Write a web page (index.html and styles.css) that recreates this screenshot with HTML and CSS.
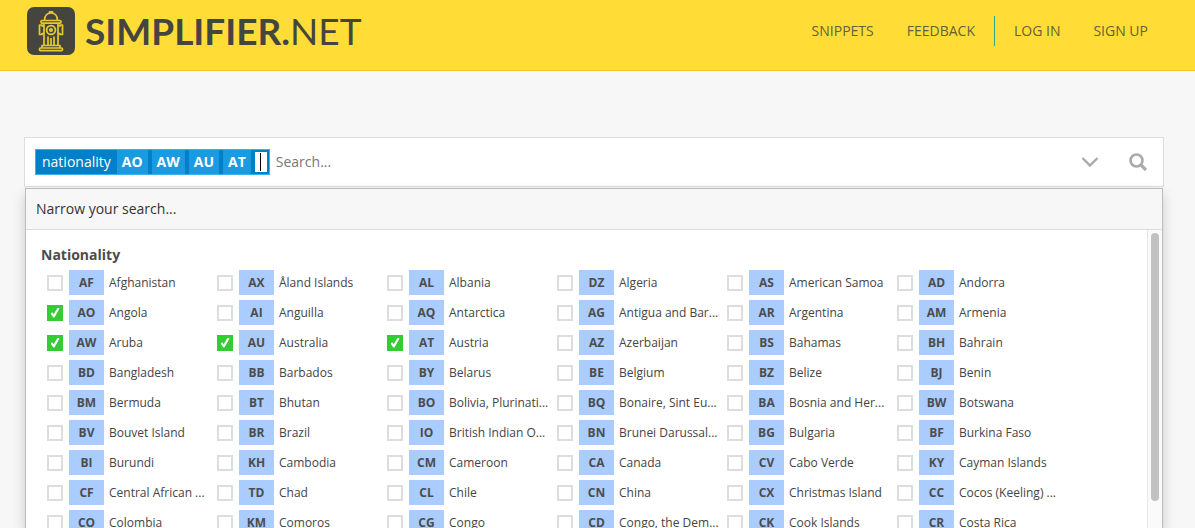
FILE: index.html
```html
<!DOCTYPE html>
<html lang="en">
  <head>
    <meta charset="UTF-8" />
    <meta name="viewport" content="width=device-width, initial-scale=1.0" />
    <title>Simplifier.net - Search</title>
    <link rel="stylesheet" href="styles.css">
  </head>
  <body>
    <header class="topbar">
      <a class="logo" href="#">
        <svg class="logo-icon" viewBox="0 0 48 48" aria-hidden="true">
          <rect width="48" height="48" rx="7" fill="#45453f" />
          <g fill="none" stroke="#e8ca2e" stroke-width="1.7" stroke-linejoin="round">
            <path d="M17.500 13.500c0-5 3-7.500 6.500-7.500s6.500 2.500 6.500 7.500M22.500 6V4.800h3V6" />
            <rect x="14" y="13.500" width="20" height="2.600" rx="1" />
            <path d="M17 16.500V38.500M31 16.500V38.500M17 19h-2v-1h-2.500v9.500H15v-1h2M31 19h2v-1h2.500v9.500H33v-1h-2" />
            <circle cx="24" cy="23" r="4.400" stroke-width="1.8" />
            <circle cx="24" cy="23" r="1.200" />
            <path d="M21 29.500v8.500M24 31v7M27 29.500v8.500M15 41v-2.500h18V41" />
            <rect x="12.500" y="41" width="23" height="2.600" rx="1" />
          </g>
        </svg>
        <span class="logo-text"><b>SIMPLIFIER.</b>NET</span>
      </a>
      <nav class="menu">
        <a href="#">SNIPPETS</a>
        <a href="#">FEEDBACK</a>
        <span class="divider"></span>
        <a href="#">LOG IN</a>
        <a href="#">SIGN UP</a>
      </nav>
    </header>

    <main class="content">
      <form class="search" id="searchForm">
        <div class="filter">
          <label class="filter-name" for="filterValue">nationality</label>
          <span class="filter-value">AO</span>
          <span class="filter-value">AW</span>
          <span class="filter-value">AU</span>
          <span class="filter-value">AT</span>
          <input class="filter-input" type="text" id="filterValue" />
        </div>
        <input class="search-input" type="text" placeholder="Search..." aria-label="Search" />
        <button class="icon-button" type="button" aria-label="Show filters">
          <svg width="18" height="12" viewBox="0 0 18 12">
            <path d="M1.500 2l7.500 7.500L16.500 2" fill="none" stroke="#aaa" stroke-width="2.400" />
          </svg>
        </button>
        <button class="icon-button" type="submit" aria-label="Search">
          <svg width="18" height="18" viewBox="0 0 18 18">
            <circle cx="7.500" cy="7.500" r="6" fill="none" stroke="#aaa" stroke-width="2.600" />
            <path d="M12 12l5 5" stroke="#aaa" stroke-width="3.200" />
          </svg>
        </button>
      </form>

      <section class="dropdown">
        <div class="dropdown-title">Narrow your search...</div>
        <div class="dropdown-body">
          <div class="group">
            <h2>Nationality</h2>
            <div class="countries" id="countries"></div>
          </div>
          <div class="scrollbar"><div class="thumb"></div></div>
        </div>
      </section>
    </main>

    <script>
      const selected = ["AO", "AW", "AU", "AT"];

      const countries = [
        ["AF", "Afghanistan"],
        ["AX", "Åland Islands"],
        ["AL", "Albania"],
        ["DZ", "Algeria"],
        ["AS", "American Samoa"],
        ["AD", "Andorra"],
        ["AO", "Angola"],
        ["AI", "Anguilla"],
        ["AQ", "Antarctica"],
        ["AG", "Antigua and Barbuda"],
        ["AR", "Argentina"],
        ["AM", "Armenia"],
        ["AW", "Aruba"],
        ["AU", "Australia"],
        ["AT", "Austria"],
        ["AZ", "Azerbaijan"],
        ["BS", "Bahamas"],
        ["BH", "Bahrain"],
        ["BD", "Bangladesh"],
        ["BB", "Barbados"],
        ["BY", "Belarus"],
        ["BE", "Belgium"],
        ["BZ", "Belize"],
        ["BJ", "Benin"],
        ["BM", "Bermuda"],
        ["BT", "Bhutan"],
        ["BO", "Bolivia, Plurinational State of"],
        ["BQ", "Bonaire, Sint Eustatius and Saba"],
        ["BA", "Bosnia and Herzegovina"],
        ["BW", "Botswana"],
        ["BV", "Bouvet Island"],
        ["BR", "Brazil"],
        ["IO", "British Indian Ocean Territory"],
        ["BN", "Brunei Darussalam"],
        ["BG", "Bulgaria"],
        ["BF", "Burkina Faso"],
        ["BI", "Burundi"],
        ["KH", "Cambodia"],
        ["CM", "Cameroon"],
        ["CA", "Canada"],
        ["CV", "Cabo Verde"],
        ["KY", "Cayman Islands"],
        ["CF", "Central African Republic"],
        ["TD", "Chad"],
        ["CL", "Chile"],
        ["CN", "China"],
        ["CX", "Christmas Island"],
        ["CC", "Cocos (Keeling) Islands"],
        ["CO", "Colombia"],
        ["KM", "Comoros"],
        ["CG", "Congo"],
        ["CD", "Congo, the Democratic Republic of the"],
        ["CK", "Cook Islands"],
        ["CR", "Costa Rica"],
      ];

      const maxWidth = 100;
      const list = document.getElementById("countries");
      const ctx = document.createElement("canvas").getContext("2d");
      ctx.font = '12px "Open Sans", sans-serif';

      // cut long names so that they fit in their column
      function shorten(name) {
        if (ctx.measureText(name).width <= maxWidth) return name;
        let end = name.length;
        while (ctx.measureText(name.slice(0, end) + "...").width > maxWidth) {
          end--;
        }
        return name.slice(0, end) + "...";
      }

      countries.forEach(([code, name]) => {
        const label = document.createElement("label");
        label.className = "country";

        const box = document.createElement("input");
        box.type = "checkbox";
        box.value = code;
        box.checked = selected.includes(code);

        const badge = document.createElement("span");
        badge.className = "code";
        badge.textContent = code;

        const text = document.createElement("span");
        text.className = "name";
        text.textContent = shorten(name);

        label.append(box, badge, text);
        list.appendChild(label);
      });

      document
        .getElementById("searchForm")
        .addEventListener("submit", (e) => e.preventDefault());
    </script>
  </body>
</html>
```

FILE: styles.css
```css
* {
  box-sizing: border-box;
}
body {
  margin: 0;
  height: 100vh;
  display: flex;
  flex-direction: column;
  overflow: hidden;
  background-color: #f7f7f7;
  color: #444;
  font-family: "Open Sans", sans-serif;
  font-size: 14px;
}
input, button {
  font-family: inherit;
  font-size: inherit;
}

/* header */
.topbar {
  display: flex;
  justify-content: space-between;
  align-items: flex-start;
  padding: 7px 47px 15px 27px;
  background-color: #ffdd36;
  border-bottom: 1px solid #f0c62c;
}
.logo {
  display: flex;
  align-items: center;
  gap: 10px;
  color: #45453f;
  text-decoration: none;
}
.logo-icon {
  width: 48px;
  height: 48px;
}
.logo-text {
  font-family: Lato, sans-serif;
  font-size: 37px;
  line-height: 48px;
}
.menu {
  display: flex;
  align-items: center;
  gap: 33px;
  padding-top: 8px;
}
.menu a {
  color: #66603a;
  line-height: 32px;
  text-decoration: none;
}
.divider {
  width: 1px;
  height: 30px;
  margin: 0 -14px;
  background-color: #2fa58c;
}

/* search box */
.content {
  flex: 1;
  min-height: 0;
  display: flex;
  flex-direction: column;
  gap: 1px;
  padding: 66px 31px 0 24px;
}
.search {
  display: flex;
  align-items: center;
  height: 50px;
  padding: 0 1px 0 10px;
  background-color: #fff;
  border: 1px solid #ddd;
}
.filter {
  display: flex;
  height: 26px;
  gap: 4px;
  padding-right: 2px;
  background-color: #0080c8;
  border: 1px solid #35b3ea;
  color: #fff;
  line-height: 24px;
}
.filter-name {
  padding: 0 2px 0 6px;
}
.filter-value {
  padding: 0 5px;
  background-color: #1a9ae0;
  font-weight: bold;
}
.filter-input {
  width: 12px;
  height: 20px;
  margin: 2px 0;
  padding: 0;
  border: 0;
  background: linear-gradient(#000, #000) center / 1px 18px no-repeat #fff;
}
.search-input {
  flex: 1;
  min-width: 0;
  height: 26px;
  padding: 0 6px 2px;
  border: 0;
  outline: 0;
  background: none;
}
.search-input::placeholder {
  color: #777;
}
.icon-button {
  display: flex;
  align-items: center;
  justify-content: center;
  width: 48px;
  height: 48px;
  padding: 0;
  border: 0;
  background: none;
}

/* dropdown */
.dropdown {
  flex: 1;
  min-height: 0;
  display: flex;
  flex-direction: column;
  margin: 0 1px;
  background-color: #fff;
  border: 1px solid #bbb;
  border-bottom: 0;
  box-shadow: 0 6px 12px rgba(0, 0, 0, 0.18);
}
.dropdown-title {
  padding: 0 10px;
  line-height: 40px;
  color: #333;
  background-color: #f7f7f7;
  border-bottom: 1px solid #ddd;
}
.dropdown-body {
  flex: 1;
  min-height: 0;
  display: flex;
  overflow: hidden;
}
.group {
  flex: 1;
  padding: 15px;
}
.group h2 {
  margin: 0;
  color: #4c4c4c;
  font-size: 14px;
  line-height: 20px;
}
.countries {
  display: grid;
  grid-template-columns: repeat(auto-fill, 170px);
  padding: 3px 6px;
}
.country {
  display: flex;
  align-items: center;
  height: 30px;
  padding-bottom: 1px;
  font-size: 12px;
}
.country input {
  flex: none;
  appearance: none;
  display: flex;
  align-items: center;
  justify-content: center;
  width: 16px;
  height: 16px;
  margin: 0 6px 0 0;
  border: 2px solid #ddd;
  background-color: #fff;
}
.country input:checked {
  border-color: #3c3;
  background-color: #3c3;
}
.country input:checked::after {
  content: "";
  width: 9px;
  height: 10px;
  background-color: #fff;
  clip-path: polygon(0 60%, 18% 48%, 36% 68%, 80% 0, 100% 10%, 44% 100%, 32% 100%);
}
.code {
  flex: none;
  width: 35px;
  height: 25px;
  background-color: #acf;
  color: #4c4c4c;
  font-weight: bold;
  line-height: 25px;
  text-align: center;
}
.name {
  padding-left: 5px;
  white-space: nowrap;
}
.scrollbar {
  width: 15px;
  padding: 3px;
  background-color: #fafafa;
  border-left: 1px solid #e8e8e8;
}
.thumb {
  width: 8px;
  height: 268px;
  border-radius: 4px;
  background-color: #c1c1c1;
}
```
